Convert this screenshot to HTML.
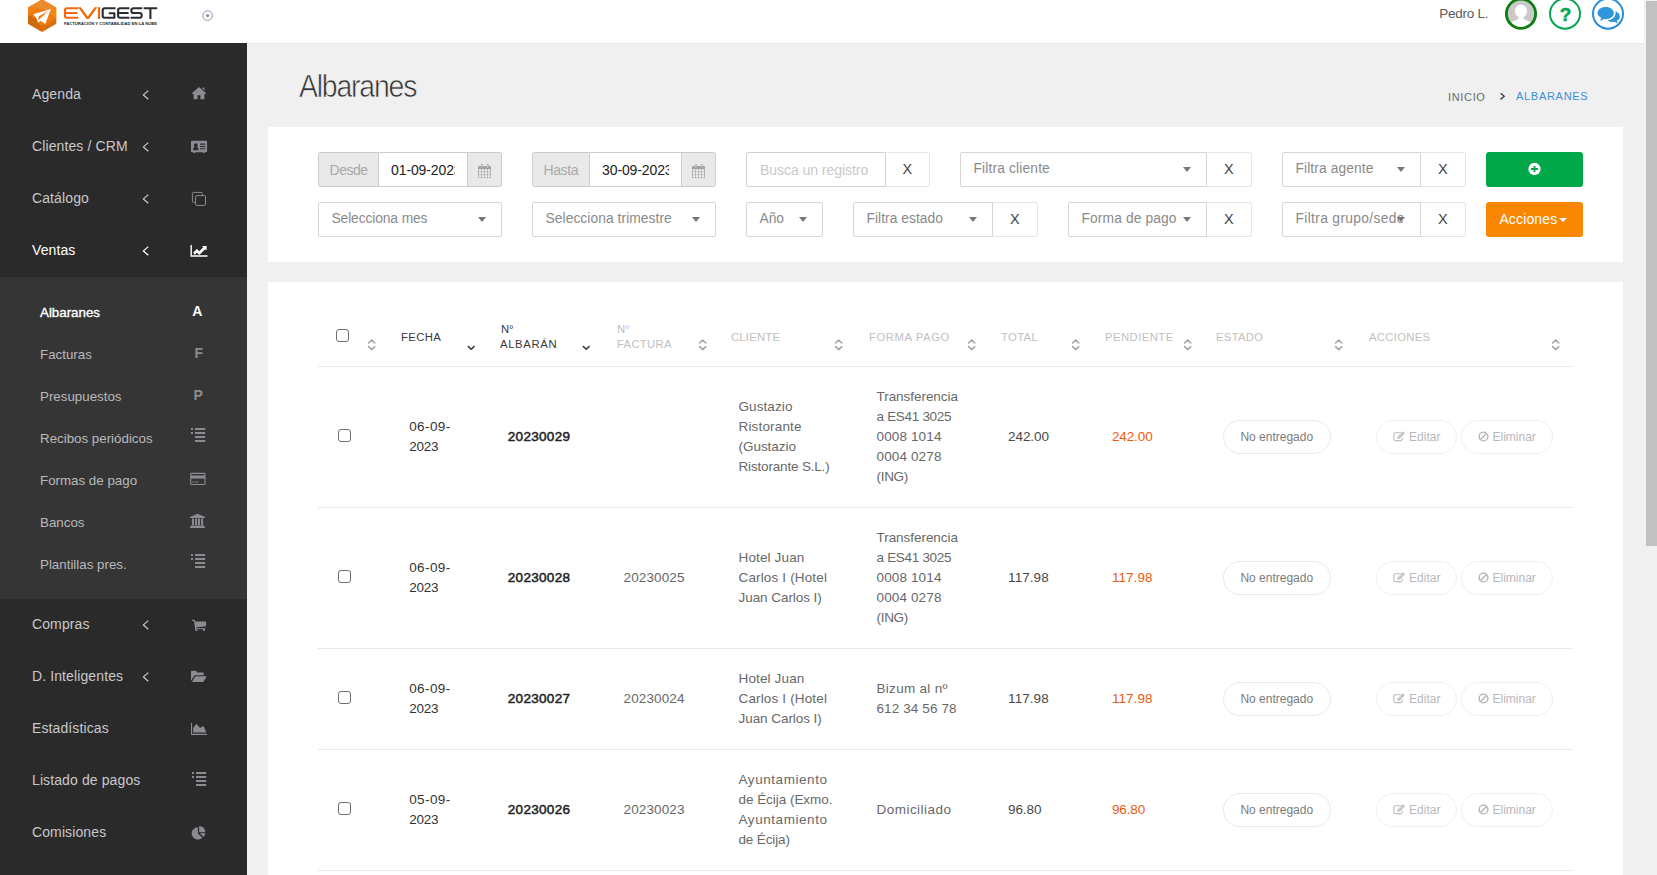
<!DOCTYPE html>
<html lang="es">
<head>
<meta charset="utf-8">
<title>Albaranes</title>
<style>
*{box-sizing:border-box;margin:0;padding:0}
html,body{width:1657px;height:875px;overflow:hidden;background:#f0f0f0;font-family:"Liberation Sans",sans-serif;}
body{position:relative;color:#555}
.t{position:absolute;white-space:nowrap}
.b{position:absolute}
svg{position:absolute;overflow:visible}
#hdr{position:absolute;left:0;top:0;width:1644px;height:43px;background:#fff;overflow:hidden}
#sbtrack{position:absolute;left:1644px;top:0;width:13px;height:875px;background:#f1f1f1;}
#sbthumb{position:absolute;left:2px;top:1px;width:11px;height:545px;background:#c1c1c1;}
#side{position:absolute;left:0;top:43px;width:247px;height:832px;background:#2a2a2a;}
#sub{position:absolute;left:0;top:234px;width:247px;height:322px;background:#353535;}
.panel{position:absolute;left:268px;width:1355px;background:#fff}
.fld{position:absolute;height:35px;border:1px solid #d6d6d6;border-radius:2px;background:#fff}
.addon{position:absolute;height:35px;border:1px solid #ccc;background:#e9e9e9}
.xb{position:absolute;height:35px;border:1px solid #e6e6e6;border-left:none;border-radius:0 3px 3px 0;background:#fff}
.car{position:absolute;width:0;height:0;border-left:4px solid transparent;border-right:4px solid transparent;border-top:5px solid #666}
.hl{position:absolute;left:318px;width:1255px;height:1px;background:#e9e9e9}
.cb{position:absolute;width:13px;height:13px;border:1.2px solid #706d72;border-radius:3px;background:#fff}
.pill{position:absolute;height:34px;border-radius:17px;background:#fff}
</style>
</head>
<body>
<div id="hdr">
<svg style="left:0;top:0" width="247" height="43" viewBox="0 0 247 43">
<defs><linearGradient id="hg" x1="0" y1="0" x2="1" y2="1"><stop offset="0" stop-color="#f48a1e"/><stop offset="1" stop-color="#d9650c"/></linearGradient></defs>
<path d="M41.2,-0.2 Q42.1,-0.7 43,-0.2 L55.4,6.9 Q56.2,7.4 56.2,8.4 L56.2,22.8 Q56.2,23.8 55.4,24.3 L43,31.4 Q42.1,31.9 41.2,31.4 L28.8,24.3 Q28,23.8 28,22.8 L28,8.4 Q28,7.4 28.8,6.9 Z" fill="#ef7a10"/>
<path d="M42.1,-0.5 L56.2,7.6 L49,11.5 L35.5,7.6 L28,7.6 Z" fill="#ee8a2e"/>
<path d="M28,7.6 L35.5,7.6 L42,9.5 L28,15.5 Z" fill="#f0800f"/>
<path d="M28,15 L36,19 L40,25.5 L42.1,31.8 L28,23.6 Z" fill="#cf690e"/>
<path d="M42.1,31.8 L40,25.5 L46,25 L56.2,18 L56.2,23.6 Z" fill="#d9700f"/>
<path d="M56.2,7.6 L56.2,18 L50,14 L51.5,10 Z" fill="#f28c0a"/>
<path d="M51,9.1 L33,14.3 L36.8,18.4 L37.9,22.7 L40.6,20.7 L45.2,24 Z" fill="#fff"/>
<path d="M48,11 L38.5,16.6 L38.3,20.2 Z" fill="#f07c12"/>
<g fill="none" stroke="#f2680c" stroke-width="2.1" stroke-linejoin="round">
<path d="M78.4,8.3 H67 Q65,8.3 65,10.3 V15.8 Q65,17.8 67,17.8 H78.4 M65,13.05 H77.4"/>
</g>
<path d="M78.1,7.2 H80.9 L87.8,16.4 L94.6,7.2 H97.4 L88.9,18.9 H86.6 Z" fill="#f2680c"/>
<rect x="97.9" y="7.2" width="2.2" height="11.7" fill="#f2680c"/>
<g fill="none" stroke="#2c2c33" stroke-width="2.1" stroke-linejoin="round">
<path d="M115.5,8.3 H104.7 Q102.7,8.3 102.7,10.3 V15.8 Q102.7,17.8 104.7,17.8 H114.4 V13.3 H108.8"/>
<path d="M129.4,8.3 H120.1 Q118.1,8.3 118.1,10.3 V15.8 Q118.1,17.8 120.1,17.8 H129.4 M118.1,13.05 H128.6"/>
<path d="M142.2,8.3 H133.4 Q131.4,8.3 131.4,10.3 V11 Q131.4,13.05 133.4,13.05 H139.7 Q141.7,13.05 141.7,15 V15.8 Q141.7,17.8 139.7,17.8 H130.6"/>
<path d="M143.6,8.3 H157.2 M150.4,8.3 V18.9"/>
</g>
<text x="63.9" y="25" font-family="Liberation Sans, sans-serif" font-weight="bold" font-size="4.3" textLength="93.2" lengthAdjust="spacingAndGlyphs" fill="#1f1f24">FACTURACIÓN Y CONTABILIDAD EN LA NUBE</text>
<circle cx="207.6" cy="15.6" r="4.8" fill="none" stroke="#8f93ad" stroke-width="1"/>
<circle cx="207.6" cy="15.6" r="1.7" fill="#8f93ad"/>
</svg>
<div class="t " style="left:1439.20px;top:4.40px;font-size:13.5px;line-height:19px;color:#5a5a5a;letter-spacing:-0.233px;">Pedro L.</div>
<svg style="left:1500px;top:-6px" width="130" height="40" viewBox="1500 -6 130 40">
<defs><clipPath id="avc"><circle cx="1521" cy="13.7" r="14.5"/></clipPath></defs>
<circle cx="1521" cy="13.7" r="14.5" fill="#c9c9c9"/>
<g clip-path="url(#avc)" fill="#fff">
<ellipse cx="1521" cy="11.1" rx="6.1" ry="6.6"/>
<path d="M1518.6,15 H1523.4 V18.2 Q1524,19.6 1527,20.6 Q1532.5,22.4 1534,27 L1534,31 H1508 L1508,27 Q1509.5,22.4 1515,20.6 Q1518,19.6 1518.6,18.2 Z"/>
</g>
<circle cx="1521" cy="13.7" r="14.6" fill="none" stroke="#0d7d10" stroke-width="2.8"/>
<circle cx="1565" cy="13.7" r="15" fill="#fff" stroke="#08a651" stroke-width="2"/>
<circle cx="1608" cy="13.7" r="15" fill="#fff" stroke="#2b8fd8" stroke-width="2"/>
<text x="1565.5" y="21.2" text-anchor="middle" font-family="Liberation Sans, sans-serif" font-weight="bold" font-size="19" fill="#08a651" stroke="#08a651" stroke-width="0.5">?</text>
<g transform="translate(2.2,0.2)"><path d="M1603.5,6.8 C1608.2,6.8 1611.7,9.4 1611.7,12.9 C1611.7,16.4 1608.2,19 1603.5,19 C1602.8,19 1602.1,18.9 1601.4,18.8 C1600.3,19.8 1598.9,20.3 1597.6,20.4 C1598.4,19.6 1598.9,18.8 1599,17.6 C1596.8,16.5 1595.3,14.8 1595.3,12.9 C1595.3,9.4 1598.8,6.8 1603.5,6.8 Z" fill="#2f96dc"/>
<path d="M1613.2,11 C1616,12.100 1617.700,14 1617.700,16.200 C1617.700,18 1616.500,19.600 1614.600,20.600 C1614.700,21.600 1615.300,22.400 1616,23 C1614.600,22.900 1613.300,22.400 1612.300,21.600 C1611.700,21.700 1611.100,21.800 1610.400,21.800 C1608.300,21.800 1606.400,21.200 1605,20.300 C1609.700,19.900 1613.400,17 1613.400,12.900 C1613.400,12.200 1613.300,11.600 1613.200,11 Z" fill="#2f96dc"/>
</svg>
</div>
<div class="b" style="left:247px;top:43px;width:1397px;height:1px;background:#e9e9e9"></div>
<div id="side"><div id="sub"></div></div>
<div class="t " style="left:32.00px;top:84.00px;font-size:14px;line-height:20px;color:#c8c8cc;letter-spacing:0.110px;">Agenda</div>
<svg style="left:142px;top:89.8px" width="8" height="10" viewBox="0 0 8 10"><path d="M6.3,0.6 L1.4,4.9 L6.3,9.2" fill="none" stroke="#c8c8cc" stroke-width="1.25"/></svg>
<div class="t " style="left:32.00px;top:136.00px;font-size:14px;line-height:20px;color:#c8c8cc;letter-spacing:0.110px;">Clientes / CRM</div>
<svg style="left:142px;top:141.8px" width="8" height="10" viewBox="0 0 8 10"><path d="M6.3,0.6 L1.4,4.9 L6.3,9.2" fill="none" stroke="#c8c8cc" stroke-width="1.25"/></svg>
<div class="t " style="left:32.00px;top:188.00px;font-size:14px;line-height:20px;color:#c8c8cc;letter-spacing:0.110px;">Catálogo</div>
<svg style="left:142px;top:193.8px" width="8" height="10" viewBox="0 0 8 10"><path d="M6.3,0.6 L1.4,4.9 L6.3,9.2" fill="none" stroke="#c8c8cc" stroke-width="1.25"/></svg>
<div class="t " style="left:32.00px;top:240.00px;font-size:14px;line-height:20px;color:#fff;letter-spacing:0.110px;">Ventas</div>
<svg style="left:142px;top:245.8px" width="8" height="10" viewBox="0 0 8 10"><path d="M6.3,0.6 L1.4,4.9 L6.3,9.2" fill="none" stroke="#fff" stroke-width="1.25"/></svg>
<div class="t " style="left:32.00px;top:614.00px;font-size:14px;line-height:20px;color:#c8c8cc;letter-spacing:0.110px;">Compras</div>
<svg style="left:142px;top:619.8px" width="8" height="10" viewBox="0 0 8 10"><path d="M6.3,0.6 L1.4,4.9 L6.3,9.2" fill="none" stroke="#c8c8cc" stroke-width="1.25"/></svg>
<div class="t " style="left:32.00px;top:666.00px;font-size:14px;line-height:20px;color:#c8c8cc;letter-spacing:0.110px;">D. Inteligentes</div>
<svg style="left:142px;top:671.8px" width="8" height="10" viewBox="0 0 8 10"><path d="M6.3,0.6 L1.4,4.9 L6.3,9.2" fill="none" stroke="#c8c8cc" stroke-width="1.25"/></svg>
<div class="t " style="left:32.00px;top:718.00px;font-size:14px;line-height:20px;color:#c8c8cc;letter-spacing:0.110px;">Estadísticas</div>
<div class="t " style="left:32.00px;top:770.00px;font-size:14px;line-height:20px;color:#c8c8cc;letter-spacing:0.110px;">Listado de pagos</div>
<div class="t " style="left:32.00px;top:822.00px;font-size:14px;line-height:20px;color:#c8c8cc;letter-spacing:0.110px;">Comisiones</div>
<div class="t " style="left:40.00px;top:303.00px;font-size:13.33px;line-height:19px;color:#fff;-webkit-text-stroke:0.35px #fff;">Albaranes</div>
<div class="t " style="left:40.00px;top:345.00px;font-size:13.33px;line-height:19px;color:#b9b9bd;">Facturas</div>
<div class="t " style="left:40.00px;top:387.00px;font-size:13.33px;line-height:19px;color:#b9b9bd;">Presupuestos</div>
<div class="t " style="left:40.00px;top:429.00px;font-size:13.33px;line-height:19px;color:#b9b9bd;">Recibos periódicos</div>
<div class="t " style="left:40.00px;top:471.00px;font-size:13.33px;line-height:19px;color:#b9b9bd;">Formas de pago</div>
<div class="t " style="left:40.00px;top:513.00px;font-size:13.33px;line-height:19px;color:#b9b9bd;">Bancos</div>
<div class="t " style="left:40.00px;top:555.00px;font-size:13.33px;line-height:19px;color:#b9b9bd;">Plantillas pres.</div>
<div class="t " style="left:192.30px;top:301.00px;font-size:14px;line-height:20px;color:#fff;font-weight:bold;">A</div>
<div class="t " style="left:194.60px;top:343.00px;font-size:14px;line-height:20px;color:#8c8b92;font-weight:bold;">F</div>
<div class="t " style="left:193.60px;top:385.00px;font-size:14px;line-height:20px;color:#8c8b92;font-weight:bold;">P</div>
<svg style="left:191px;top:428px" width="16" height="16" viewBox="0 0 16 16" fill="#8c8b92"><rect x="4" y="0" width="10.2" height="2"/><rect x="4" y="4" width="10.2" height="2"/><rect x="4" y="8" width="10.2" height="2"/><rect x="4" y="12" width="10.2" height="2"/><rect x="0" y="0" width="2" height="2"/><rect x="0" y="4" width="2" height="2"/></svg>
<svg style="left:191px;top:554px" width="16" height="16" viewBox="0 0 16 16" fill="#8c8b92"><rect x="4" y="0" width="10.2" height="2"/><rect x="4" y="4" width="10.2" height="2"/><rect x="4" y="8" width="10.2" height="2"/><rect x="4" y="12" width="10.2" height="2"/><rect x="0" y="0" width="2" height="2"/><rect x="0" y="4" width="2" height="2"/></svg>
<svg style="left:192px;top:772px" width="16" height="16" viewBox="0 0 16 16" fill="#8c8b92"><rect x="4" y="0" width="10.2" height="2"/><rect x="4" y="4" width="10.2" height="2"/><rect x="4" y="8" width="10.2" height="2"/><rect x="4" y="12" width="10.2" height="2"/><rect x="0" y="0" width="2" height="2"/><rect x="0" y="4" width="2" height="2"/></svg>
<svg style="left:191px;top:86px" width="16" height="14" viewBox="191 86 16 14" fill="#8c8b92"><path d="M199,86.9 L206.2,93.3 L205.3,94.3 L204.4,93.5 L204.4,99.2 L200.4,99.2 L200.4,95.2 L197.6,95.2 L197.6,99.2 L193.6,99.2 L193.6,93.5 L192.7,94.3 L191.8,93.3 Z M202.6,87.4 L204.4,87.4 L204.4,90.6 L202.6,89 Z"/></svg>
<svg style="left:190px;top:140px" width="18" height="14" viewBox="190 140 18 14"><path fill-rule="evenodd" fill="#8c8b92" d="M192,140.8 H206.1 Q207.1,140.8 207.1,141.8 V151.2 Q207.1,152.2 206.1,152.2 H204.6 V153.1 H203 V152.2 H195.2 V153.1 H193.6 V152.2 H192 Q191,152.2 191,151.2 V141.8 Q191,140.8 192,140.8 Z M200,143.6 H205.3 V144.7 H200 Z M200,145.9 H205.3 V147 H200 Z M200,148.2 H205.3 V149.3 H200 Z M193,150.3 Q193,147.3 194.6,146.9 Q193.9,146.2 193.9,145.2 Q193.9,143.3 195.8,143.3 Q197.7,143.3 197.7,145.2 Q197.7,146.2 197,146.9 Q198.6,147.3 198.6,150.3 Z"/></svg>
<svg style="left:191px;top:191px" width="16" height="16" viewBox="191 191 16 16" fill="none" stroke="#8c8b92" stroke-width="1"><rect x="195.6" y="195.6" width="9.9" height="9.8" rx="1.2"/><path d="M195.6,202.4 H193.6 Q192.4,202.4 192.4,201.2 V193.6 Q192.4,192.4 193.6,192.4 H201.2 Q202.4,192.4 202.4,193.6 V195.6"/></svg>
<svg style="left:190px;top:244px" width="19" height="14" viewBox="190 244 19 14"><path d="M190.5,244.9 H191.9 V255.3 H207.5 V256.7 H190.5 Z" fill="#fff"/><path d="M193.2,252.6 L196.9,248.9 L199.3,251.3 L203.3,247.3 L201.9,245.9 L206.6,245.9 L206.6,250.6 L205.2,249.2 L199.3,255.1 L196.9,252.7 L194.6,255 Z" fill="#fff"/></svg>
<svg style="left:190px;top:472px" width="17" height="14" viewBox="190 472 17 14"><path fill-rule="evenodd" fill="#8c8b92" d="M191.4,472.8 H204.4 Q205.6,472.8 205.6,474 V483.8 Q205.6,485 204.4,485 H191.4 Q190.2,485 190.2,483.8 V474 Q190.2,472.8 191.4,472.8 Z M191.3,473.9 V475.6 H204.5 V473.9 Z M191.3,478.6 V483.9 H204.5 V478.6 Z M192.4,481.6 H194.3 V482.6 H192.4 Z M195.2,481.6 H198.4 V482.6 H195.2 Z"/></svg>
<svg style="left:189px;top:513px" width="17" height="16" viewBox="189 513 17 16" fill="#8c8b92"><path d="M197.5,513.7 L205.1,517 V518 H189.9 V517 Z M190.9,525.6 H204.1 V526.7 H205.1 V527.9 H189.9 V526.7 H190.9 Z M192,518.6 H194 V525 H192 Z M195.1,518.6 H197.1 V525 H195.1 Z M198,518.6 H200 V525 H198 Z M201.1,518.6 H203.1 V525 H201.1 Z"/></svg>
<svg style="left:192px;top:619px" width="15" height="13" viewBox="192 619 15 13" fill="#8c8b92"><path d="M192.1,619.8 H194 Q194.9,619.8 195.1,620.9 L195.2,621.4 H206 V626.3 L196,627.4 L196.2,628.3 H205.1 V629.3 H195.2 L194,621.3 Q194,620.9 193.6,620.9 H192.1 Z"/><rect x="195.3" y="628.8" width="2" height="2"/><rect x="203" y="628.8" width="2" height="2"/></svg>
<svg style="left:191px;top:670px" width="17" height="13" viewBox="191 670 17 13" fill="#8c8b92"><path d="M191,672 Q191,670.8 192.2,670.8 H195.6 Q196.8,670.8 196.8,672 V672.6 H202.6 Q203.8,672.6 203.8,673.8 V675.3 H195.6 Q194.5,675.3 193.9,676.3 L191,681 Z"/><path d="M194.9,677 Q195.3,676.3 196.1,676.3 H206 Q206.9,676.3 206.4,677.1 L203.8,681.3 Q203.4,682 202.6,682 H191.9 Z"/></svg>
<svg style="left:191px;top:722px" width="17" height="14" viewBox="191 722 17 14" fill="#8c8b92"><path d="M191,722.8 H192.1 V733.8 H207.1 V734.9 H191 Z"/><path d="M193.2,732.6 V728 L196.5,723.8 L200,727.9 L203.4,726 L206,731.6 V732.6 Z"/></svg>
<svg style="left:191px;top:825px" width="16" height="16" viewBox="191 825 16 16" fill="#8c8b92"><path d="M197.9,827.2 V833.4 L202.3,837.8 A6.2,6.2 0 1 1 197.9,827.2 Z"/><path d="M199.1,826 A6.2,6.2 0 0 1 205.3,832.2 H199.1 Z"/><path d="M199.8,833.3 H205.5 A6.2,6.2 0 0 1 203.5,837.1 Z"/></svg>
<div class="t " style="left:298.90px;top:65.20px;font-size:30.6px;line-height:43px;color:#303030;letter-spacing:-1.310px;-webkit-text-stroke:0.62px #f0f0f0;transform:scaleX(0.93);transform-origin:0 0;">Albaranes</div>
<div class="t " style="left:1447.70px;top:91.10px;font-size:10px;line-height:14px;color:#6a6a6a;letter-spacing:0.598px;transform:scaleX(1.1);transform-origin:0 0;">INICIO</div>
<svg style="left:1499px;top:92px" width="8" height="9" viewBox="1499 92 8 9"><path d="M1500.6,93.2 L1504.2,96.3 L1500.6,99.4" fill="none" stroke="#444" stroke-width="1.4"/></svg>
<div class="t " style="left:1515.80px;top:89.90px;font-size:10px;line-height:14px;color:#3a8fd9;letter-spacing:0.645px;transform:scaleX(1.1);transform-origin:0 0;">ALBARANES</div>
<div class="panel" style="top:127px;height:135px"></div>
<div class="panel" style="top:282px;height:593px"></div>
<div class="addon" style="left:318px;top:152px;width:61px;border-radius:2.5px 0 0 2.5px"></div>
<div class="t " style="left:329.60px;top:159.80px;font-size:14px;line-height:20px;color:#a9a9a9;letter-spacing:-0.517px;">Desde</div>
<div class="fld" style="left:379px;top:152px;width:89px;border-radius:0;border-left:none;border-right:none;border-color:#ccc"></div>
<div class="b" style="left:379px;top:153px;width:75.7px;height:33px;overflow:hidden">
<div class="t " style="left:12.10px;top:6.80px;font-size:14px;line-height:20px;color:#222;letter-spacing:-0.124px;">01-09-2023</div>
</div>
<div class="addon" style="left:466.8px;top:152px;width:35.2px;border-radius:0 2.5px 2.5px 0"></div>
<svg style="left:478px;top:164px" width="14" height="15" viewBox="0 0 14 15"><rect x="0" y="2" width="13" height="12" rx="0.6" fill="#a2a2a2"/><rect x="0.75" y="5.25" width="2.4" height="2.3" fill="#f3f3f3"/><rect x="3.78" y="5.25" width="2.4" height="2.3" fill="#f3f3f3"/><rect x="6.81" y="5.25" width="2.4" height="2.3" fill="#f3f3f3"/><rect x="9.84" y="5.25" width="2.4" height="2.3" fill="#f3f3f3"/><rect x="0.75" y="8.2" width="2.4" height="2.3" fill="#f3f3f3"/><rect x="3.78" y="8.2" width="2.4" height="2.3" fill="#f3f3f3"/><rect x="6.81" y="8.2" width="2.4" height="2.3" fill="#f3f3f3"/><rect x="9.84" y="8.2" width="2.4" height="2.3" fill="#f3f3f3"/><rect x="0.75" y="11.15" width="2.4" height="2.3" fill="#f3f3f3"/><rect x="3.78" y="11.15" width="2.4" height="2.3" fill="#f3f3f3"/><rect x="6.81" y="11.15" width="2.4" height="2.3" fill="#f3f3f3"/><rect x="9.84" y="11.15" width="2.4" height="2.3" fill="#f3f3f3"/><rect x="2.9" y="0" width="2" height="4" rx="0.9" fill="#a2a2a2"/><rect x="8.7" y="0" width="2" height="4" rx="0.9" fill="#a2a2a2"/><rect x="3.55" y="0.8" width="0.7" height="2.6" fill="#ececec"/><rect x="9.35" y="0.8" width="0.7" height="2.6" fill="#ececec"/></svg>
<div class="addon" style="left:532px;top:152px;width:58px;border-radius:2.5px 0 0 2.5px"></div>
<div class="t " style="left:543.50px;top:159.80px;font-size:14px;line-height:20px;color:#a9a9a9;letter-spacing:-0.393px;">Hasta</div>
<div class="fld" style="left:590px;top:152px;width:92px;border-radius:0;border-left:none;border-right:none;border-color:#ccc"></div>
<div class="b" style="left:590px;top:153px;width:78.7px;height:33px;overflow:hidden">
<div class="t " style="left:12.10px;top:6.80px;font-size:14px;line-height:20px;color:#222;letter-spacing:-0.124px;">30-09-2023</div>
</div>
<div class="addon" style="left:680.8px;top:152px;width:35.2px;border-radius:0 2.5px 2.5px 0"></div>
<svg style="left:692px;top:164px" width="14" height="15" viewBox="0 0 14 15"><rect x="0" y="2" width="13" height="12" rx="0.6" fill="#a2a2a2"/><rect x="0.75" y="5.25" width="2.4" height="2.3" fill="#f3f3f3"/><rect x="3.78" y="5.25" width="2.4" height="2.3" fill="#f3f3f3"/><rect x="6.81" y="5.25" width="2.4" height="2.3" fill="#f3f3f3"/><rect x="9.84" y="5.25" width="2.4" height="2.3" fill="#f3f3f3"/><rect x="0.75" y="8.2" width="2.4" height="2.3" fill="#f3f3f3"/><rect x="3.78" y="8.2" width="2.4" height="2.3" fill="#f3f3f3"/><rect x="6.81" y="8.2" width="2.4" height="2.3" fill="#f3f3f3"/><rect x="9.84" y="8.2" width="2.4" height="2.3" fill="#f3f3f3"/><rect x="0.75" y="11.15" width="2.4" height="2.3" fill="#f3f3f3"/><rect x="3.78" y="11.15" width="2.4" height="2.3" fill="#f3f3f3"/><rect x="6.81" y="11.15" width="2.4" height="2.3" fill="#f3f3f3"/><rect x="9.84" y="11.15" width="2.4" height="2.3" fill="#f3f3f3"/><rect x="2.9" y="0" width="2" height="4" rx="0.9" fill="#a2a2a2"/><rect x="8.7" y="0" width="2" height="4" rx="0.9" fill="#a2a2a2"/><rect x="3.55" y="0.8" width="0.7" height="2.6" fill="#ececec"/><rect x="9.35" y="0.8" width="0.7" height="2.6" fill="#ececec"/></svg>
<div class="fld" style="left:746px;top:152px;width:140px;border-color:#d2d2d2;border-radius:2px 0 0 2px"></div>
<div class="t " style="left:760.00px;top:160.00px;font-size:14px;line-height:20px;color:#c9c9c9;letter-spacing:-0.047px;">Busca un registro</div>
<div class="xb" style="left:885.5px;top:152px;width:44px"></div>
<div class="t " style="left:902.60px;top:159.00px;font-size:14.5px;line-height:20px;color:#444;">X</div>
<div class="fld" style="left:960px;top:152px;width:247px;border-radius:2px 0 0 2px"></div>
<div class="t " style="left:973.50px;top:159.00px;font-size:13.8px;line-height:19px;color:#8a8a8a;letter-spacing:0.147px;">Filtra cliente</div>
<div class="car" style="left:1183px;top:166.5px;border-top-color:#777"></div>
<div class="xb" style="left:1206.5px;top:152px;width:45px"></div>
<div class="t " style="left:1224.10px;top:159.00px;font-size:14.5px;line-height:20px;color:#444;">X</div>
<div class="fld" style="left:1282px;top:152px;width:139px;border-radius:2px 0 0 2px"></div>
<div class="t " style="left:1295.50px;top:159.00px;font-size:13.8px;line-height:19px;color:#8a8a8a;letter-spacing:0.099px;">Filtra agente</div>
<div class="car" style="left:1397px;top:166.5px;border-top-color:#777"></div>
<div class="xb" style="left:1420.5px;top:152px;width:45px"></div>
<div class="t " style="left:1438.10px;top:159.00px;font-size:14.5px;line-height:20px;color:#444;">X</div>
<div class="fld" style="left:318px;top:202px;width:184px"></div>
<div class="t " style="left:331.50px;top:209.00px;font-size:13.8px;line-height:19px;color:#8a8a8a;letter-spacing:-0.109px;">Selecciona mes</div>
<div class="car" style="left:478px;top:216.5px;border-top-color:#777"></div>
<div class="fld" style="left:532px;top:202px;width:184px"></div>
<div class="t " style="left:545.50px;top:209.00px;font-size:13.8px;line-height:19px;color:#8a8a8a;letter-spacing:0.068px;">Selecciona trimestre</div>
<div class="car" style="left:692px;top:216.5px;border-top-color:#777"></div>
<div class="fld" style="left:746px;top:202px;width:77px"></div>
<div class="t " style="left:759.50px;top:209.00px;font-size:13.8px;line-height:19px;color:#8a8a8a;letter-spacing:-0.027px;">Año</div>
<div class="car" style="left:799px;top:216.5px;border-top-color:#777"></div>
<div class="fld" style="left:853px;top:202px;width:140px;border-radius:2px 0 0 2px"></div>
<div class="t " style="left:866.50px;top:209.00px;font-size:13.8px;line-height:19px;color:#8a8a8a;letter-spacing:0.047px;">Filtra estado</div>
<div class="car" style="left:969px;top:216.5px;border-top-color:#777"></div>
<div class="xb" style="left:992.5px;top:202px;width:45px"></div>
<div class="t " style="left:1010.10px;top:209.00px;font-size:14.5px;line-height:20px;color:#444;">X</div>
<div class="fld" style="left:1068px;top:202px;width:139px;border-radius:2px 0 0 2px"></div>
<div class="t " style="left:1081.50px;top:209.00px;font-size:13.8px;line-height:19px;color:#8a8a8a;letter-spacing:0.118px;">Forma de pago</div>
<div class="car" style="left:1183px;top:216.5px;border-top-color:#777"></div>
<div class="xb" style="left:1206.5px;top:202px;width:45px"></div>
<div class="t " style="left:1224.10px;top:209.00px;font-size:14.5px;line-height:20px;color:#444;">X</div>
<div class="fld" style="left:1282px;top:202px;width:139px;border-radius:2px 0 0 2px"></div>
<div class="b" style="left:1283px;top:203px;width:120px;height:33px;overflow:hidden">
<div class="t " style="left:12.50px;top:6.00px;font-size:13.8px;line-height:19px;color:#8a8a8a;letter-spacing:0.340px;">Filtra grupo/sede</div>
</div>
<div class="car" style="left:1397px;top:216.5px;border-top-color:#777"></div>
<div class="xb" style="left:1420.5px;top:202px;width:45px"></div>
<div class="t " style="left:1438.10px;top:209.00px;font-size:14.5px;line-height:20px;color:#444;">X</div>
<div class="b" style="left:1486px;top:152px;width:97px;height:35px;background:#02a84a;border-radius:3px"></div>
<svg style="left:1527px;top:162px" width="15" height="15" viewBox="0 0 15 15"><circle cx="7.5" cy="7" r="6.15" fill="#fff"/><path d="M6.55,3.9 H8.45 V6.05 H11 V7.95 H8.45 V10.1 H6.55 V7.95 H4 V6.05 H6.55 Z" fill="#02a84a"/></svg>
<div class="b" style="left:1486px;top:202px;width:97px;height:35px;background:#fa8704;border-radius:3px"></div>
<div class="t " style="left:1499.40px;top:209.00px;font-size:14px;line-height:20px;color:#fff;letter-spacing:0.142px;">Acciones</div>
<div class="car" style="left:1559px;top:218.3px;border-top:4px solid #fff"></div>
<div class="cb" style="left:336px;top:329px"></div>
<svg style="left:368.3px;top:339px" width="8" height="12" viewBox="0 0 8 12"><path d="M0.6,4 L3.7,1 L6.8,4 M0.6,7.6 L3.7,10.6 L6.8,7.6" fill="none" stroke="#a6a6a6" stroke-width="1.5" stroke-linecap="round"/></svg>
<div class="t " style="left:401.40px;top:330.70px;font-size:10px;line-height:14px;color:#3a3a3a;letter-spacing:0.332px;transform:scaleX(1.13);transform-origin:0 0;">FECHA</div>
<svg style="left:466.5px;top:345px" width="9" height="6" viewBox="0 0 9 6"><path d="M0.9,1.1 L4.2,4.3 L7.5,1.1" fill="none" stroke="#3a3a3a" stroke-width="1.5"/></svg>
<div class="t " style="left:500.60px;top:322.60px;font-size:10px;line-height:14px;color:#3a3a3a;letter-spacing:-0.159px;transform:scaleX(1.13);transform-origin:0 0;">N°</div>
<div class="t " style="left:500.40px;top:337.70px;font-size:10px;line-height:14px;color:#3a3a3a;letter-spacing:0.567px;transform:scaleX(1.13);transform-origin:0 0;">ALBARÁN</div>
<svg style="left:582.4px;top:345px" width="9" height="6" viewBox="0 0 9 6"><path d="M0.9,1.1 L4.2,4.3 L7.5,1.1" fill="none" stroke="#3a3a3a" stroke-width="1.5"/></svg>
<div class="t " style="left:616.70px;top:322.60px;font-size:10px;line-height:14px;color:#c0c0c0;letter-spacing:-0.159px;transform:scaleX(1.13);transform-origin:0 0;">N°</div>
<div class="t " style="left:616.50px;top:337.70px;font-size:10px;line-height:14px;color:#c0c0c0;letter-spacing:0.260px;transform:scaleX(1.13);transform-origin:0 0;">FACTURA</div>
<svg style="left:698.5px;top:339px" width="8" height="12" viewBox="0 0 8 12"><path d="M0.6,4 L3.7,1 L6.8,4 M0.6,7.6 L3.7,10.6 L6.8,7.6" fill="none" stroke="#a6a6a6" stroke-width="1.5" stroke-linecap="round"/></svg>
<div class="t " style="left:731.00px;top:330.70px;font-size:10px;line-height:14px;color:#c0c0c0;letter-spacing:0.189px;transform:scaleX(1.13);transform-origin:0 0;">CLIENTE</div>
<svg style="left:835.4px;top:339px" width="8" height="12" viewBox="0 0 8 12"><path d="M0.6,4 L3.7,1 L6.8,4 M0.6,7.6 L3.7,10.6 L6.8,7.6" fill="none" stroke="#a6a6a6" stroke-width="1.5" stroke-linecap="round"/></svg>
<div class="t " style="left:869.00px;top:330.70px;font-size:10px;line-height:14px;color:#c0c0c0;letter-spacing:0.518px;transform:scaleX(1.13);transform-origin:0 0;">FORMA PAGO</div>
<svg style="left:967.6px;top:339px" width="8" height="12" viewBox="0 0 8 12"><path d="M0.6,4 L3.7,1 L6.8,4 M0.6,7.6 L3.7,10.6 L6.8,7.6" fill="none" stroke="#a6a6a6" stroke-width="1.5" stroke-linecap="round"/></svg>
<div class="t " style="left:1000.50px;top:330.70px;font-size:10px;line-height:14px;color:#c0c0c0;letter-spacing:0.316px;transform:scaleX(1.13);transform-origin:0 0;">TOTAL</div>
<svg style="left:1071.6px;top:339px" width="8" height="12" viewBox="0 0 8 12"><path d="M0.6,4 L3.7,1 L6.8,4 M0.6,7.6 L3.7,10.6 L6.8,7.6" fill="none" stroke="#a6a6a6" stroke-width="1.5" stroke-linecap="round"/></svg>
<div class="t " style="left:1104.70px;top:330.70px;font-size:10px;line-height:14px;color:#c0c0c0;letter-spacing:0.390px;transform:scaleX(1.13);transform-origin:0 0;">PENDIENTE</div>
<svg style="left:1183.5px;top:339px" width="8" height="12" viewBox="0 0 8 12"><path d="M0.6,4 L3.7,1 L6.8,4 M0.6,7.6 L3.7,10.6 L6.8,7.6" fill="none" stroke="#a6a6a6" stroke-width="1.5" stroke-linecap="round"/></svg>
<div class="t " style="left:1216.20px;top:330.70px;font-size:10px;line-height:14px;color:#c0c0c0;letter-spacing:0.261px;transform:scaleX(1.13);transform-origin:0 0;">ESTADO</div>
<svg style="left:1335.4px;top:339px" width="8" height="12" viewBox="0 0 8 12"><path d="M0.6,4 L3.7,1 L6.8,4 M0.6,7.6 L3.7,10.6 L6.8,7.6" fill="none" stroke="#a6a6a6" stroke-width="1.5" stroke-linecap="round"/></svg>
<div class="t " style="left:1368.50px;top:330.70px;font-size:10px;line-height:14px;color:#c0c0c0;letter-spacing:0.250px;transform:scaleX(1.13);transform-origin:0 0;">ACCIONES</div>
<svg style="left:1552.4px;top:339px" width="8" height="12" viewBox="0 0 8 12"><path d="M0.6,4 L3.7,1 L6.8,4 M0.6,7.6 L3.7,10.6 L6.8,7.6" fill="none" stroke="#a6a6a6" stroke-width="1.5" stroke-linecap="round"/></svg>
<div class="hl" style="top:366px"></div>
<div class="hl" style="top:507px"></div>
<div class="hl" style="top:648px"></div>
<div class="hl" style="top:749px"></div>
<div class="hl" style="top:870px"></div>
<div class="cb" style="left:338px;top:429px"></div>
<div class="t " style="left:409.20px;top:417.20px;font-size:13.5px;line-height:19px;color:#333;letter-spacing:0.395px;">06-09-</div>
<div class="t " style="left:409.20px;top:437.20px;font-size:13.5px;line-height:19px;color:#333;letter-spacing:-0.211px;">2023</div>
<div class="t " style="left:507.80px;top:427.30px;font-size:13.5px;line-height:19px;color:#222;letter-spacing:0.305px;-webkit-text-stroke:0.5px #222;">20230029</div>
<div class="t " style="left:738.50px;top:397.20px;font-size:13.5px;line-height:19px;color:#686868;letter-spacing:0.089px;">Gustazio</div>
<div class="t " style="left:738.50px;top:417.20px;font-size:13.5px;line-height:19px;color:#686868;letter-spacing:0.164px;">Ristorante</div>
<div class="t " style="left:738.50px;top:437.20px;font-size:13.5px;line-height:19px;color:#686868;letter-spacing:-0.034px;">(Gustazio</div>
<div class="t " style="left:738.50px;top:457.20px;font-size:13.5px;line-height:19px;color:#686868;letter-spacing:-0.173px;">Ristorante S.L.)</div>
<div class="t " style="left:876.50px;top:387.20px;font-size:13.5px;line-height:19px;color:#686868;letter-spacing:-0.045px;">Transferencia</div>
<div class="t " style="left:876.50px;top:407.20px;font-size:13.5px;line-height:19px;color:#686868;letter-spacing:-0.307px;">a ES41 3025</div>
<div class="t " style="left:876.50px;top:427.20px;font-size:13.5px;line-height:19px;color:#686868;letter-spacing:0.136px;">0008 1014</div>
<div class="t " style="left:876.50px;top:447.20px;font-size:13.5px;line-height:19px;color:#686868;letter-spacing:0.136px;">0004 0278</div>
<div class="t " style="left:876.50px;top:467.20px;font-size:13.5px;line-height:19px;color:#686868;letter-spacing:-0.298px;">(ING)</div>
<div class="t " style="left:1008.10px;top:427.30px;font-size:13.5px;line-height:19px;color:#484848;letter-spacing:-0.098px;">242.00</div>
<div class="t " style="left:1111.90px;top:427.30px;font-size:13.5px;line-height:19px;color:#ee5a0c;letter-spacing:-0.098px;">242.00</div>
<div class="pill" style="left:1223px;top:420px;width:108px;border:1px solid #e9e9e9"></div>
<div class="t " style="left:1240.40px;top:428.80px;font-size:12px;line-height:17px;color:#7c7c7c;">No entregado</div>
<div class="pill" style="left:1376px;top:420px;width:81px;border:1px solid #f0f0f0"></div>
<svg style="left:1392.8px;top:430.8px" width="13" height="11" viewBox="0 0 13 11"><path d="M8.2,1.7 H2.4 Q0.8,1.7 0.8,3.3 V8 Q0.8,9.6 2.4,9.6 H7.6 Q9.2,9.6 9.2,8 V6.6" fill="none" stroke="#bcbcbc" stroke-width="1.1"/><path d="M4.6,5.6 L9.9,0.3 L11.9,2.3 L6.6,7.6 L4.3,7.9 Z" fill="#bcbcbc"/><path d="M5.5,5.9 L9.6,1.8" stroke="#fff" stroke-width="0.6"/></svg>
<div class="t " style="left:1409.10px;top:428.80px;font-size:12px;line-height:17px;color:#b8b8b8;">Editar</div>
<div class="pill" style="left:1461px;top:420px;width:92px;border:1px solid #f0f0f0"></div>
<svg style="left:1477.9px;top:430.6px" width="11" height="11" viewBox="0 0 11 11"><circle cx="5.5" cy="5.5" r="4.4" fill="none" stroke="#b4b4b4" stroke-width="1.4"/><path d="M2.5,8.5 L8.5,2.5" stroke="#b4b4b4" stroke-width="1.4"/></svg>
<div class="t " style="left:1492.50px;top:428.80px;font-size:12px;line-height:17px;color:#b8b8b8;">Eliminar</div>
<div class="cb" style="left:338px;top:570px"></div>
<div class="t " style="left:409.20px;top:558.20px;font-size:13.5px;line-height:19px;color:#333;letter-spacing:0.395px;">06-09-</div>
<div class="t " style="left:409.20px;top:578.20px;font-size:13.5px;line-height:19px;color:#333;letter-spacing:-0.211px;">2023</div>
<div class="t " style="left:507.80px;top:568.30px;font-size:13.5px;line-height:19px;color:#222;letter-spacing:0.305px;-webkit-text-stroke:0.5px #222;">20230028</div>
<div class="t " style="left:623.50px;top:568.30px;font-size:13.5px;line-height:19px;color:#686868;letter-spacing:0.134px;">20230025</div>
<div class="t " style="left:738.50px;top:548.20px;font-size:13.5px;line-height:19px;color:#686868;letter-spacing:0.140px;">Hotel Juan</div>
<div class="t " style="left:738.50px;top:568.20px;font-size:13.5px;line-height:19px;color:#686868;letter-spacing:0.152px;">Carlos I (Hotel</div>
<div class="t " style="left:738.50px;top:588.20px;font-size:13.5px;line-height:19px;color:#686868;letter-spacing:-0.056px;">Juan Carlos I)</div>
<div class="t " style="left:876.50px;top:528.20px;font-size:13.5px;line-height:19px;color:#686868;letter-spacing:-0.045px;">Transferencia</div>
<div class="t " style="left:876.50px;top:548.20px;font-size:13.5px;line-height:19px;color:#686868;letter-spacing:-0.307px;">a ES41 3025</div>
<div class="t " style="left:876.50px;top:568.20px;font-size:13.5px;line-height:19px;color:#686868;letter-spacing:0.136px;">0008 1014</div>
<div class="t " style="left:876.50px;top:588.20px;font-size:13.5px;line-height:19px;color:#686868;letter-spacing:0.136px;">0004 0278</div>
<div class="t " style="left:876.50px;top:608.20px;font-size:13.5px;line-height:19px;color:#686868;letter-spacing:-0.298px;">(ING)</div>
<div class="t " style="left:1008.10px;top:568.30px;font-size:13.5px;line-height:19px;color:#484848;letter-spacing:0.062px;">117.98</div>
<div class="t " style="left:1111.90px;top:568.30px;font-size:13.5px;line-height:19px;color:#ee5a0c;letter-spacing:0.062px;">117.98</div>
<div class="pill" style="left:1223px;top:561px;width:108px;border:1px solid #e9e9e9"></div>
<div class="t " style="left:1240.40px;top:569.80px;font-size:12px;line-height:17px;color:#7c7c7c;">No entregado</div>
<div class="pill" style="left:1376px;top:561px;width:81px;border:1px solid #f0f0f0"></div>
<svg style="left:1392.8px;top:571.8px" width="13" height="11" viewBox="0 0 13 11"><path d="M8.2,1.7 H2.4 Q0.8,1.7 0.8,3.3 V8 Q0.8,9.6 2.4,9.6 H7.6 Q9.2,9.6 9.2,8 V6.6" fill="none" stroke="#bcbcbc" stroke-width="1.1"/><path d="M4.6,5.6 L9.9,0.3 L11.9,2.3 L6.6,7.6 L4.3,7.9 Z" fill="#bcbcbc"/><path d="M5.5,5.9 L9.6,1.8" stroke="#fff" stroke-width="0.6"/></svg>
<div class="t " style="left:1409.10px;top:569.80px;font-size:12px;line-height:17px;color:#b8b8b8;">Editar</div>
<div class="pill" style="left:1461px;top:561px;width:92px;border:1px solid #f0f0f0"></div>
<svg style="left:1477.9px;top:571.6px" width="11" height="11" viewBox="0 0 11 11"><circle cx="5.5" cy="5.5" r="4.4" fill="none" stroke="#b4b4b4" stroke-width="1.4"/><path d="M2.5,8.5 L8.5,2.5" stroke="#b4b4b4" stroke-width="1.4"/></svg>
<div class="t " style="left:1492.50px;top:569.80px;font-size:12px;line-height:17px;color:#b8b8b8;">Eliminar</div>
<div class="cb" style="left:338px;top:691px"></div>
<div class="t " style="left:409.20px;top:679.20px;font-size:13.5px;line-height:19px;color:#333;letter-spacing:0.395px;">06-09-</div>
<div class="t " style="left:409.20px;top:699.20px;font-size:13.5px;line-height:19px;color:#333;letter-spacing:-0.211px;">2023</div>
<div class="t " style="left:507.80px;top:689.30px;font-size:13.5px;line-height:19px;color:#222;letter-spacing:0.305px;-webkit-text-stroke:0.5px #222;">20230027</div>
<div class="t " style="left:623.50px;top:689.30px;font-size:13.5px;line-height:19px;color:#686868;letter-spacing:0.134px;">20230024</div>
<div class="t " style="left:738.50px;top:669.20px;font-size:13.5px;line-height:19px;color:#686868;letter-spacing:0.140px;">Hotel Juan</div>
<div class="t " style="left:738.50px;top:689.20px;font-size:13.5px;line-height:19px;color:#686868;letter-spacing:0.152px;">Carlos I (Hotel</div>
<div class="t " style="left:738.50px;top:709.20px;font-size:13.5px;line-height:19px;color:#686868;letter-spacing:-0.056px;">Juan Carlos I)</div>
<div class="t " style="left:876.50px;top:679.20px;font-size:13.5px;line-height:19px;color:#686868;letter-spacing:0.294px;">Bizum al nº</div>
<div class="t " style="left:876.50px;top:699.20px;font-size:13.5px;line-height:19px;color:#686868;letter-spacing:0.107px;">612 34 56 78</div>
<div class="t " style="left:1008.10px;top:689.30px;font-size:13.5px;line-height:19px;color:#484848;letter-spacing:0.062px;">117.98</div>
<div class="t " style="left:1111.90px;top:689.30px;font-size:13.5px;line-height:19px;color:#ee5a0c;letter-spacing:0.062px;">117.98</div>
<div class="pill" style="left:1223px;top:682px;width:108px;border:1px solid #e9e9e9"></div>
<div class="t " style="left:1240.40px;top:690.80px;font-size:12px;line-height:17px;color:#7c7c7c;">No entregado</div>
<div class="pill" style="left:1376px;top:682px;width:81px;border:1px solid #f0f0f0"></div>
<svg style="left:1392.8px;top:692.8px" width="13" height="11" viewBox="0 0 13 11"><path d="M8.2,1.7 H2.4 Q0.8,1.7 0.8,3.3 V8 Q0.8,9.6 2.4,9.6 H7.6 Q9.2,9.6 9.2,8 V6.6" fill="none" stroke="#bcbcbc" stroke-width="1.1"/><path d="M4.6,5.6 L9.9,0.3 L11.9,2.3 L6.6,7.6 L4.3,7.9 Z" fill="#bcbcbc"/><path d="M5.5,5.9 L9.6,1.8" stroke="#fff" stroke-width="0.6"/></svg>
<div class="t " style="left:1409.10px;top:690.80px;font-size:12px;line-height:17px;color:#b8b8b8;">Editar</div>
<div class="pill" style="left:1461px;top:682px;width:92px;border:1px solid #f0f0f0"></div>
<svg style="left:1477.9px;top:692.6px" width="11" height="11" viewBox="0 0 11 11"><circle cx="5.5" cy="5.5" r="4.4" fill="none" stroke="#b4b4b4" stroke-width="1.4"/><path d="M2.5,8.5 L8.5,2.5" stroke="#b4b4b4" stroke-width="1.4"/></svg>
<div class="t " style="left:1492.50px;top:690.80px;font-size:12px;line-height:17px;color:#b8b8b8;">Eliminar</div>
<div class="cb" style="left:338px;top:802px"></div>
<div class="t " style="left:409.20px;top:790.20px;font-size:13.5px;line-height:19px;color:#333;letter-spacing:0.395px;">05-09-</div>
<div class="t " style="left:409.20px;top:810.20px;font-size:13.5px;line-height:19px;color:#333;letter-spacing:-0.211px;">2023</div>
<div class="t " style="left:507.80px;top:800.30px;font-size:13.5px;line-height:19px;color:#222;letter-spacing:0.305px;-webkit-text-stroke:0.5px #222;">20230026</div>
<div class="t " style="left:623.50px;top:800.30px;font-size:13.5px;line-height:19px;color:#686868;letter-spacing:0.134px;">20230023</div>
<div class="t " style="left:738.50px;top:770.20px;font-size:13.5px;line-height:19px;color:#686868;letter-spacing:0.563px;">Ayuntamiento</div>
<div class="t " style="left:738.50px;top:790.20px;font-size:13.5px;line-height:19px;color:#686868;letter-spacing:-0.038px;">de Écija (Exmo.</div>
<div class="t " style="left:738.50px;top:810.20px;font-size:13.5px;line-height:19px;color:#686868;letter-spacing:0.563px;">Ayuntamiento</div>
<div class="t " style="left:738.50px;top:830.20px;font-size:13.5px;line-height:19px;color:#686868;letter-spacing:-0.140px;">de Écija)</div>
<div class="t " style="left:876.50px;top:800.20px;font-size:13.5px;line-height:19px;color:#686868;letter-spacing:0.473px;">Domiciliado</div>
<div class="t " style="left:1008.10px;top:800.30px;font-size:13.5px;line-height:19px;color:#484848;letter-spacing:-0.121px;">96.80</div>
<div class="t " style="left:1111.90px;top:800.30px;font-size:13.5px;line-height:19px;color:#ee5a0c;letter-spacing:-0.121px;">96.80</div>
<div class="pill" style="left:1223px;top:793px;width:108px;border:1px solid #e9e9e9"></div>
<div class="t " style="left:1240.40px;top:801.80px;font-size:12px;line-height:17px;color:#7c7c7c;">No entregado</div>
<div class="pill" style="left:1376px;top:793px;width:81px;border:1px solid #f0f0f0"></div>
<svg style="left:1392.8px;top:803.8px" width="13" height="11" viewBox="0 0 13 11"><path d="M8.2,1.7 H2.4 Q0.8,1.7 0.8,3.3 V8 Q0.8,9.6 2.4,9.6 H7.6 Q9.2,9.6 9.2,8 V6.6" fill="none" stroke="#bcbcbc" stroke-width="1.1"/><path d="M4.6,5.6 L9.9,0.3 L11.9,2.3 L6.6,7.6 L4.3,7.9 Z" fill="#bcbcbc"/><path d="M5.5,5.9 L9.6,1.8" stroke="#fff" stroke-width="0.6"/></svg>
<div class="t " style="left:1409.10px;top:801.80px;font-size:12px;line-height:17px;color:#b8b8b8;">Editar</div>
<div class="pill" style="left:1461px;top:793px;width:92px;border:1px solid #f0f0f0"></div>
<svg style="left:1477.9px;top:803.6px" width="11" height="11" viewBox="0 0 11 11"><circle cx="5.5" cy="5.5" r="4.4" fill="none" stroke="#b4b4b4" stroke-width="1.4"/><path d="M2.5,8.5 L8.5,2.5" stroke="#b4b4b4" stroke-width="1.4"/></svg>
<div class="t " style="left:1492.50px;top:801.80px;font-size:12px;line-height:17px;color:#b8b8b8;">Eliminar</div>
<div id="sbtrack"><div id="sbthumb"></div></div>
</body>
</html>
